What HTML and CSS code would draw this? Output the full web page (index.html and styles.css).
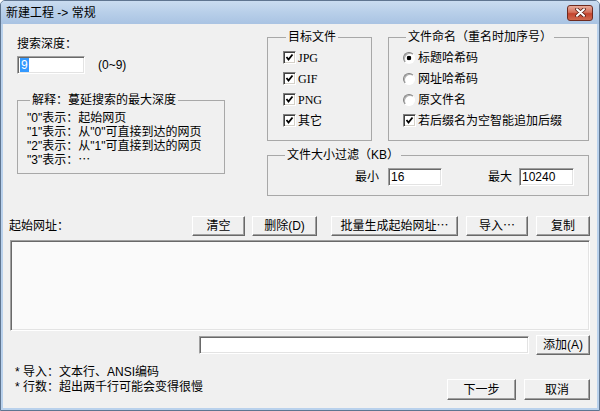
FILE: index.html
```html
<!DOCTYPE html>
<html lang="zh-CN">
<head>
  <meta charset="UTF-8">
  <title>新建工程 -> 常规</title>
  <link rel="stylesheet" href="styles.css">
</head>
<body>
  <div class="window">
    <div class="titlebar">
      <span class="title">新建工程 -&gt; 常规</span>
      <button class="close" title="关闭">
        <svg width="11" height="9" viewBox="0 0 11 9">
          <path d="M2 1.2 L9 7.8 M9 1.2 L2 7.8" stroke="#5a2016" stroke-width="3.6" stroke-linecap="round"/>
          <path d="M2 1.2 L9 7.8 M9 1.2 L2 7.8" stroke="#fff" stroke-width="2" stroke-linecap="round"/>
        </svg>
      </button>
    </div>

    <div class="client">
      <div class="top">
        <div class="depth">
          <div class="depth-label">搜索深度：</div>
          <div class="depth-row">
            <div class="field depth-input"><span class="sel">9</span></div>
            <span class="hint">(0~9)</span>
          </div>
          <fieldset class="group explain">
            <legend>解释：蔓延搜索的最大深度</legend>
            <div>"0"表示：起始网页</div>
            <div>"1"表示：从"0"可直接到达的网页</div>
            <div>"2"表示：从"1"可直接到达的网页</div>
            <div>"3"表示：⋯</div>
          </fieldset>
        </div>

        <div class="options">
          <div class="options-row">
            <fieldset class="group types">
              <legend>目标文件</legend>
              <div class="choice"><span class="check on"><svg width="9" height="9" viewBox="0 0 9 9"><path d="M1.5 4 L3.5 6.5 L7.5 1.5" fill="none" stroke="#000" stroke-width="1.8"/></svg></span><span class="latin">JPG</span></div>
              <div class="choice"><span class="check on"><svg width="9" height="9" viewBox="0 0 9 9"><path d="M1.5 4 L3.5 6.5 L7.5 1.5" fill="none" stroke="#000" stroke-width="1.8"/></svg></span><span class="latin">GIF</span></div>
              <div class="choice"><span class="check on"><svg width="9" height="9" viewBox="0 0 9 9"><path d="M1.5 4 L3.5 6.5 L7.5 1.5" fill="none" stroke="#000" stroke-width="1.8"/></svg></span><span class="latin">PNG</span></div>
              <div class="choice"><span class="check on"><svg width="9" height="9" viewBox="0 0 9 9"><path d="M1.5 4 L3.5 6.5 L7.5 1.5" fill="none" stroke="#000" stroke-width="1.8"/></svg></span><span>其它</span></div>
            </fieldset>

            <fieldset class="group naming">
              <legend>文件命名（重名时加序号）</legend>
              <div class="choice"><span class="radio on"></span><span>标题哈希码</span></div>
              <div class="choice"><span class="radio"></span><span>网址哈希码</span></div>
              <div class="choice"><span class="radio"></span><span>原文件名</span></div>
              <div class="choice"><span class="check on"><svg width="9" height="9" viewBox="0 0 9 9"><path d="M1.5 4 L3.5 6.5 L7.5 1.5" fill="none" stroke="#000" stroke-width="1.8"/></svg></span><span>若后缀名为空智能追加后缀</span></div>
            </fieldset>
          </div>

          <fieldset class="group size">
            <legend>文件大小过滤（KB）</legend>
            <div class="size-row">
              <span>最小</span>
              <input class="field size-min" value="16">
              <span class="size-max-label">最大</span>
              <input class="field size-max" value="10240">
            </div>
          </fieldset>
        </div>
      </div>

      <div class="urls">
        <div class="url-bar">
          <span class="url-label">起始网址：</span>
          <button class="btn btn-clear">清空</button>
          <button class="btn btn-delete">删除(D)</button>
          <button class="btn btn-batch">批量生成起始网址⋯</button>
          <button class="btn btn-import">导入⋯</button>
          <button class="btn btn-copy">复制</button>
        </div>
        <div class="url-list"></div>
        <div class="add-row">
          <input class="field add-input" value="">
          <button class="btn btn-add">添加(A)</button>
        </div>
        <div class="footer">
          <div class="notes">
            <div>* 导入：文本行、ANSI编码</div>
            <div>* 行数：超出两千行可能会变得很慢</div>
          </div>
          <div class="actions">
            <button class="btn btn-next">下一步</button>
            <button class="btn btn-cancel">取消</button>
          </div>
        </div>
      </div>
    </div>
  </div>
</body>
</html>
```

FILE: styles.css
```css
body {
  margin: 0;
  font-family: "Liberation Sans", "Noto Sans CJK SC", sans-serif;
  font-size: 12px;
  line-height: 14px;
  color: #000;
}

.window {
  width: 600px;
  height: 411px;
  box-sizing: border-box;
  border: 1px solid #5f7590;
  border-radius: 5px 5px 0 0;
  background: #b9d1ec;
  padding: 0 2px 2px;
  display: flex;
  flex-direction: column;
}

.titlebar {
  height: 23px;
  margin: 0 -2px;
  padding: 0 6px 0 5px;
  display: flex;
  align-items: center;
  justify-content: space-between;
  background: linear-gradient(#cadcf0, #b8cfe9 50%, #a9c3e3);
  border-radius: 4px 4px 0 0;
}

.title {
  font-size: 12px;
}

.close {
  width: 26px;
  height: 16px;
  padding: 0;
  border: 1px solid #6e2a1f;
  border-radius: 3px;
  background: linear-gradient(#e8ab9b, #d4705a 45%, #c3432d 55%, #cf6a4f);
  display: flex;
  align-items: center;
  justify-content: center;
}

.client {
  flex: 1;
  background: #f0f0f0;
  display: flex;
  flex-direction: column;
}

/* верхняя часть */
.top {
  display: flex;
  gap: 42px;
  padding: 6px 8px 0 14px;
}

.depth {
  width: 208px;
  padding-top: 7px;
}

.depth-row {
  display: flex;
  align-items: center;
  margin-top: 5px;
}

.hint {
  margin-left: 13px;
}

.field {
  box-sizing: border-box;
  height: 18px;
  margin: 0;
  padding: 0 2px;
  border: 1px solid;
  border-color: #a0a0a0 #fff #fff #a0a0a0;
  box-shadow: inset 1px 1px #696969, inset -1px -1px #e3e3e3;
  background: #fff;
  font: inherit;
  line-height: 16px;
  outline: none;
}

.depth-input {
  width: 68px;
  display: flex;
  align-items: center;
}

.sel {
  background: #3399ff;
  color: #fff;
  padding: 0 1px;
  line-height: 14px;
}

.group {
  box-sizing: border-box;
  margin: 0;
  border: 1px solid #a8a8a8;
  min-width: 0;
}

.group legend {
  padding: 0 2px;
  margin-left: 3px;
  line-height: 14px;
}

.explain {
  width: 208px;
  margin-top: 19px;
  padding: 4px 9px 6px;
  line-height: 14px;
  white-space: nowrap;
}

.options {
  width: 322px;
}

.options-row {
  display: flex;
  gap: 16px;
}

.types {
  width: 105px;
  padding: 3px 0 9px 15px;
}

.naming {
  width: 201px;
  padding: 3px 0 9px 14px;
  white-space: nowrap;
}

.choice {
  display: flex;
  align-items: center;
  height: 21px;
  gap: 2px;
}

.latin {
  font-family: "Liberation Serif", serif;
  font-size: 12px;
}

.check {
  box-sizing: border-box;
  width: 13px;
  height: 13px;
  border: 1px solid;
  border-color: #808080 #fff #fff #808080;
  box-shadow: inset 1px 1px #404040, inset -1px -1px #d4d0c8;
  background: #fff;
  display: flex;
  align-items: center;
  justify-content: center;
}

.radio {
  box-sizing: border-box;
  width: 12px;
  height: 12px;
  margin-right: 1px;
  border-radius: 50%;
  border: 1px solid;
  border-color: #808080 #fff #fff #808080;
  background: #fff;
  box-shadow: inset 1px 1px #b0b0b0;
}

.radio.on {
  background: radial-gradient(circle, #000 0 2px, #fff 2.6px);
}

.size {
  margin-top: 7px;
  padding: 6px 14px 9px;
}

.size-row {
  display: flex;
  align-items: center;
  justify-content: flex-end;
  height: 18px;
}

.size-min {
  width: 54px;
  margin-left: 9px;
}

.size-max-label {
  margin-left: 46px;
}

.size-max {
  width: 55px;
  margin-left: 7px;
}

/* список адресов */
.urls {
  margin-top: 20px;
  padding: 0 7px 0 6px;
}

.url-bar {
  display: flex;
  align-items: center;
  height: 20px;
}

.url-label {
  flex: 1;
}

.btn {
  box-sizing: border-box;
  height: 20px;
  padding: 0;
  font: inherit;
  line-height: 14px;
  background: #f0f0f0;
  border: 1px solid;
  border-color: #fff #696969 #696969 #fff;
  box-shadow: inset -1px -1px #a0a0a0;
  color: #000;
}

.btn-clear { width: 53px; }
.btn-delete { width: 65px; margin-left: 7px; }
.btn-batch { width: 127px; margin-left: 14px; }
.btn-import { width: 62px; margin-left: 8px; }
.btn-copy { width: 54px; margin-left: 8px; }

.url-list {
  box-sizing: border-box;
  height: 91px;
  margin-top: 4px;
  margin-left: 1px;
  border: 1px solid;
  border-color: #a0a0a0 #fff #fff #a0a0a0;
  box-shadow: inset 1px 1px #696969, inset -1px -1px #e3e3e3;
  background: #fafafa;
}

.add-row {
  display: flex;
  align-items: center;
  justify-content: flex-end;
  height: 20px;
  margin-top: 4px;
}

.add-input {
  width: 330px;
}

.btn-add {
  width: 54px;
  margin-left: 7px;
}

.footer {
  display: flex;
  justify-content: space-between;
  margin-top: 10px;
}

.notes {
  padding-left: 6px;
  line-height: 15px;
}

.actions {
  display: flex;
  gap: 8px;
  margin-top: 14px;
}

.btn-next { width: 69px; height: 21px; }
.btn-cancel { width: 66px; height: 21px; }
```
